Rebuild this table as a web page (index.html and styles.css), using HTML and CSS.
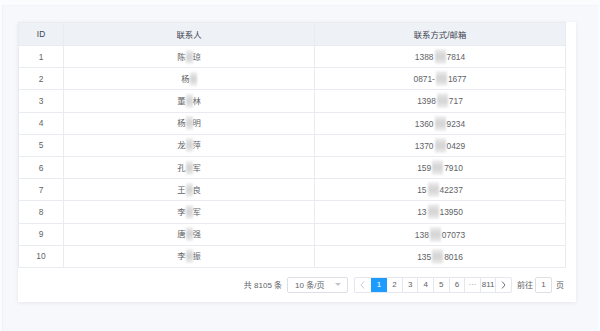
FILE: index.html
```html
<!DOCTYPE html>
<html lang="zh-CN">
<head>
  <meta charset="UTF-8">
  <title>联系人列表</title>
  <link rel="stylesheet" href="styles.css">
</head>
<body>
  <div class="frame">
    <div class="card">
      <table class="list">
        <thead>
          <tr><th class="col-id">ID</th><th>联系人</th><th>联系方式/邮箱</th></tr>
        </thead>
        <tbody>
          <tr><td>1</td><td>陈<i class="mask"></i>琼</td><td>1388<i class="mask wide"></i>7814</td></tr>
          <tr><td>2</td><td>杨<i class="mask"></i></td><td>0871-<i class="mask wide"></i>1677</td></tr>
          <tr><td>3</td><td>董<i class="mask"></i>林</td><td>1398<i class="mask wide"></i>717</td></tr>
          <tr><td>4</td><td>杨<i class="mask"></i>明</td><td>1360<i class="mask wide"></i>9234</td></tr>
          <tr><td>5</td><td>龙<i class="mask"></i>萍</td><td>1370<i class="mask wide"></i>0429</td></tr>
          <tr><td>6</td><td>孔<i class="mask"></i>军</td><td>159<i class="mask wide"></i>7910</td></tr>
          <tr><td>7</td><td>王<i class="mask"></i>良</td><td>15<i class="mask wide"></i>42237</td></tr>
          <tr><td>8</td><td>李<i class="mask"></i>军</td><td>13<i class="mask wide"></i>13950</td></tr>
          <tr><td>9</td><td>唐<i class="mask"></i>强</td><td>138<i class="mask wide"></i>07073</td></tr>
          <tr><td>10</td><td>李<i class="mask"></i>振</td><td>135<i class="mask wide"></i>8016</td></tr>
        </tbody>
      </table>

      <div class="pager">
        <span class="total">共 8105 条</span>
        <div class="size-select">
          <span>10 条/页</span>
          <i class="caret"></i>
        </div>
        <ul class="pages">
          <li class="arrow">
            <svg width="5" height="8" viewBox="0 0 5 8"><path d="M4 0.5 L1 4 L4 7.5" fill="none" stroke="#c0c4cc" stroke-width="0.9"/></svg>
          </li>
          <li class="active">1</li>
          <li>2</li>
          <li>3</li>
          <li>4</li>
          <li>5</li>
          <li>6</li>
          <li class="more">···</li>
          <li>811</li>
          <li class="arrow">
            <svg width="5" height="8" viewBox="0 0 5 8"><path d="M1 0.5 L4 4 L1 7.5" fill="none" stroke="#606266" stroke-width="0.9"/></svg>
          </li>
        </ul>
        <span class="jump">前往</span>
        <span class="jump-input">1</span>
        <span class="jump unit">页</span>
      </div>
    </div>
  </div>
</body>
</html>
```

FILE: styles.css
```css
html, body { margin: 0; height: 100%; }
body { background: #fbfcfd; font-family: "Liberation Sans", "Noto Sans CJK SC", sans-serif; font-size: 8.4px; color: #606266; }

.frame { margin: 5px 2px 0 2px; height: calc(100% - 5px); box-sizing: border-box; background: #f7f8fb; border-left: 1px solid #f0f2f5; border-top: 1px solid #f3f4f7; padding: 16px 23px 0 15px; }

.card { background: #fff; width: 558px; height: 280px; box-shadow: 0 1px 4px rgba(0, 0, 0, 0.07); }

.list { width: 548px; border-collapse: collapse; table-layout: fixed; }
.list th, .list td { border: 1px solid #e8ebf0; text-align: center; padding: 0; }
.list th { background: #eef1f5; height: 22px; font-weight: normal; color: #3f4451; }
.list td { height: 21.2px; }
.list .col-id { width: 44px; }

.mask { display: inline-block; width: 7px; height: 14px; vertical-align: -4px; background: linear-gradient(#f0f0f0, #d6d6d6 40%, #d6d6d6 60%, #f0f0f0); filter: blur(0.9px); }
.mask.wide { width: 11px; height: 15px; margin: 0 1px; }

.pager { display: flex; align-items: center; justify-content: flex-end; padding: 9px 12px 0 0; height: 16px; font-size: 8px; }
.total { margin-right: 5px; }

.size-select { width: 61px; height: 16px; box-sizing: border-box; border: 1px solid #dcdfe6; border-radius: 2px; display: flex; align-items: center; justify-content: space-between; padding: 0 6px 0 7px; margin-right: 6px; }
.caret { width: 0; height: 0; border-left: 3px solid transparent; border-right: 3px solid transparent; border-top: 3px solid #c0c4cc; }

.pages { list-style: none; margin: 0; padding: 0; display: flex; border: 1px solid #e4e7ed; border-radius: 2px; }
.pages li { width: 15.6px; height: 14px; display: flex; align-items: center; justify-content: center; border-left: 1px solid #e4e7ed; box-sizing: border-box; color: #606266; }
.pages li:first-child { border-left: none; }
.pages .active { background: #1e9bff; color: #fff; border-left-color: #1e9bff; }
.pages .more { color: #909399; }
.pages .active + li { border-left-color: #1e9bff; }

.jump { margin-left: 5px; }
.jump.unit { margin-left: 4px; }
.jump-input { width: 17px; height: 16px; box-sizing: border-box; border: 1px solid #dcdfe6; border-radius: 2px; display: flex; align-items: center; justify-content: center; margin-left: 2px; }
```
